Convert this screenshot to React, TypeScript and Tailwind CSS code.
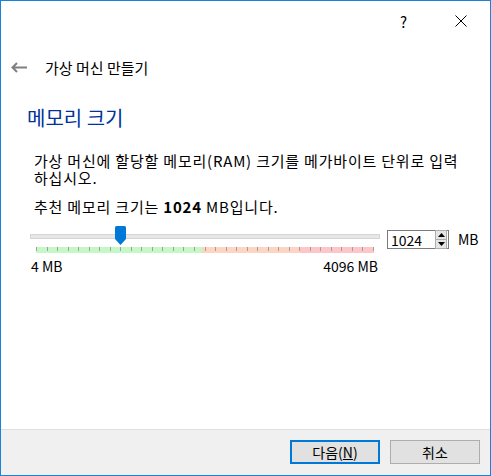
import React from 'react';

const ticks = Array.from({ length: 33 });

function Thumb() {
  return (
    <svg width="11" height="19" viewBox="0 0 11 19">
      <path d="M0 1.5 Q0 0 1.5 0 H9.5 Q11 0 11 1.5 V13 L5.5 19 L0 13 Z" fill="#0078d7" />
    </svg>
  );
}

function SpinBox() {
  return (
    <div className="mt-[4px] flex h-[19px] w-[62px] items-stretch border border-[#7a7a7a] bg-white">
      <div className="flex flex-1 items-center pl-[3px] text-[14px] leading-none">1024</div>
      <div className="my-[-1px] mr-[1px] flex w-[12px] flex-col">
        <div className="flex flex-1 items-center justify-center border border-[#adadad] bg-[#e5e5e5]">
          <svg width="7" height="4" viewBox="0 0 7 4">
            <path d="M0 4 L3.5 0 L7 4 Z" fill="#000" />
          </svg>
        </div>
        <div className="flex flex-1 items-center justify-center border border-t-0 border-[#adadad] bg-[#e5e5e5]">
          <svg width="7" height="4" viewBox="0 0 7 4">
            <path d="M0 0 L3.5 4 L7 0 Z" fill="#000" />
          </svg>
        </div>
      </div>
    </div>
  );
}

export default function App() {
  return (
    <div className="flex h-[476px] w-[491px] flex-col border border-[#1883d7] bg-white font-['Noto_Sans_CJK_KR',sans-serif] text-black">
      {/* Title bar */}
      <div className="flex h-[40px] items-center justify-end pr-[23px]">
        <span className="text-[15px] leading-none">?</span>
        <svg className="ml-[48px]" width="12" height="12" viewBox="0 0 12 12">
          <path d="M0.5 0.5 L11.5 11.5 M11.5 0.5 L0.5 11.5" stroke="#000" strokeWidth="1" />
        </svg>
      </div>

      {/* Wizard header */}
      <div className="mt-[10px] flex h-[32px] items-center pl-[10px]">
        <svg width="17" height="11" viewBox="0 0 17 11">
          <path d="M1 5.5 H16 M6 1 L1.5 5.5 L6 10" stroke="#7f7f7f" strokeWidth="2" fill="none" />
        </svg>
        <span className="ml-[17px] text-[15px] leading-none">가상 머신 만들기</span>
      </div>

      <h1 className="mt-[21px] pl-[26px] text-[20px] leading-[28px] font-normal text-[#003399]">메모리 크기</h1>

      <div className="pl-[33px] pr-[14px] text-[15px] leading-[17px] tracking-[0.8px]">
        <p className="mt-[20px]">가상 머신에 할당할 메모리(RAM) 크기를 메가바이트 단위로 입력 하십시오.</p>
        <p className="mt-[12px]">
          추천 메모리 크기는 <b>1024</b> MB입니다.
        </p>
      </div>

      {/* Slider */}
      <div className="mt-[11px] flex items-start pl-[29px]">
        <div className="relative w-[350px]">
          <div className="mt-[8px] h-[5px] border border-[#d6d6d6] bg-[#e7e7e7]" />
          <div className="absolute left-[85px] top-0">
            <Thumb />
          </div>
          <div className="mx-[6px] mt-[8px] flex h-[6px]">
            <div className="w-[166px] bg-[#c6f7c6]" />
            <div className="w-[98px] bg-[#fcd5c5]" />
            <div className="flex-1 bg-[#ffc6c9]" />
          </div>
          <div className="mx-[6px] -mt-[6px] flex h-[4px] justify-between">
            {ticks.map((_, i) => (
              <div key={i} className="w-px bg-[#a0a0a0]" />
            ))}
          </div>
          <div className="mt-[7px] flex justify-between pl-[1px] pr-[2px] text-[14px] leading-[17px]">
            <span>4 MB</span>
            <span>4096 MB</span>
          </div>
        </div>
        <div className="ml-[7px]">
          <SpinBox />
        </div>
        <span className="ml-[9px] mt-[4px] text-[14px] leading-[19px]">MB</span>
      </div>

      {/* Footer */}
      <div className="mt-auto flex h-[46px] justify-end gap-[10px] border-t border-[#dfdfdf] bg-[#f0f0f0] pr-[10px] pt-[10px]">
        <button className="flex h-[24px] w-[90px] items-center justify-center border-2 border-[#0078d7] bg-[#e1e1e1] text-[14px] leading-none">
          다음(<span className="underline">N</span>)
        </button>
        <button className="flex h-[24px] w-[90px] items-center justify-center border border-[#adadad] bg-[#e1e1e1] text-[14px] leading-none">
          취소
        </button>
      </div>
    </div>
  );
}
